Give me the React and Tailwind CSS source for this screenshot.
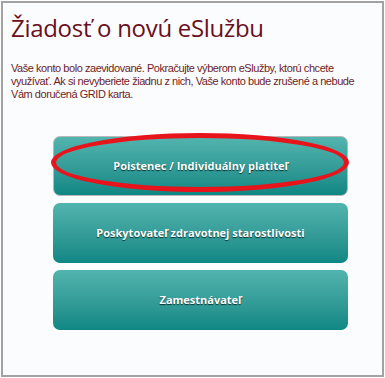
const options = [
  { label: 'Poistenec / Individuálny platiteľ', selected: true },
  { label: 'Poskytovateľ zdravotnej starostlivosti' },
  { label: 'Zamestnávateľ' },
];

export default function App() {
  return (
    <div className="h-[378px] w-[385px] bg-white p-px">
      <div className="flex h-[376px] w-[383px] flex-col border-2 border-[#a2a2a2] bg-[#fbfcfe]">
        <h1 className="mt-[8px] pl-[8px] [font-family:'Open_Sans',sans-serif] text-[24px] leading-[34px] tracking-[-0.3px] text-[#6a0f1c]">
          Žiadosť o novú eSlužbu
        </h1>
        <p className="mt-[17px] pl-[8px] pr-[20px] [font-family:'Liberation_Sans',Arial,sans-serif] text-[11px] leading-[13px] tracking-[-0.45px] text-[#6e1d26]">
          Vaše konto bolo zaevidované. Pokračujte výberom eSlužby, ktorú chcete využívať. Ak si nevyberiete žiadnu z nich, Vaše konto bude zrušené a nebude Vám doručená GRID karta.
        </p>

        <div className="mt-[35px] flex flex-col gap-[7px] pl-[50px]">
          {options.map(({ label, selected }) => (
            <div key={label} className="relative">
              <button
                className={`flex h-[60px] w-[295px] items-center justify-center rounded-[7px] bg-gradient-to-b from-[#52b4ae] to-[#0d8784] [font-family:'Open_Sans',sans-serif] text-[11px] font-bold text-white [text-shadow:0_1px_1px_rgba(0,40,40,0.9)] ${
                  selected ? 'border border-[#b9b9b9]' : ''
                }`}
              >
                {label}
              </button>
              {/* red highlight ring drawn over the chosen option */}
              {selected && (
                <div className="pointer-events-none absolute left-[-2px] top-[-3px] h-[59px] w-[298px] rounded-[50%] border-[5px] border-[#e8141c]" />
              )}
            </div>
          ))}
        </div>
      </div>
    </div>
  );
}
